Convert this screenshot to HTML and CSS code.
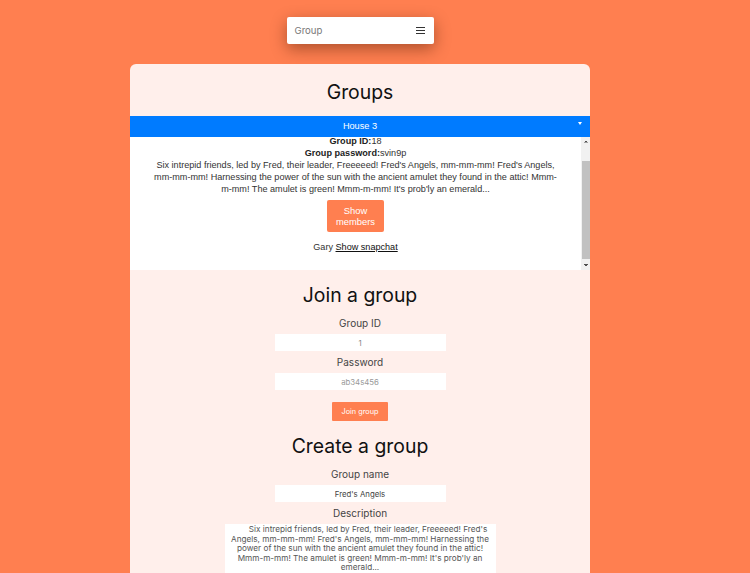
FILE: index.html
```html
<!DOCTYPE html>
<html lang="en">
<head>
<meta charset="utf-8">
<title>Groups</title>
<link rel="stylesheet" href="styles.css">
</head>
<body>
<div class="page">
  <nav class="topnav">
    <span class="topnav-title">Group</span>
    <span class="burger"><i></i><i></i><i></i></span>
  </nav>

  <main class="card">
    <h2 class="heading">Groups</h2>

    <div class="dropdown">House 3</div>
    <div class="panel">
      <div class="panel-scroll" id="panel">
        <div class="panel-inner">
          <div class="line"><b>Group ID:</b>18</div>
          <div class="line"><b>Group password:</b>svin9p</div>
          <p class="desc">Six intrepid friends, led by Fred, their leader, Freeeeed! Fred's Angels, mm-mm-mm! Fred's Angels, mm-mm-mm! Harnessing the power of the sun with the ancient amulet they found in the attic! Mmm-m-mm! The amulet is green! Mmm-m-mm! It's prob'ly an emerald...</p>
          <button class="btn-members">Show<br>members</button>
          <div class="member">Gary <a class="snap">Show snapchat</a></div>
        </div>
      </div>
      <div class="scrollbar" aria-hidden="true">
        <span class="sb-btn sb-up"></span>
        <span class="sb-thumb"></span>
        <span class="sb-btn sb-down"></span>
      </div>
    </div>

    <section class="form">
      <h2 class="heading">Join a group</h2>
      <label class="label">Group ID</label>
      <input class="field field-light" type="text" value="1">
      <label class="label">Password</label>
      <input class="field" type="text" placeholder="ab34s456">
      <button class="btn-join">Join group</button>
    </section>

    <section class="form">
      <h2 class="heading">Create a group</h2>
      <label class="label">Group name</label>
      <input class="field" type="text" value="Fred's Angels">
      <label class="label">Description</label>
      <textarea class="area">       Six intrepid friends, led by Fred, their leader, Freeeeed! Fred's Angels, mm-mm-mm! Fred's Angels, mm-mm-mm! Harnessing the power of the sun with the ancient amulet they found in the attic! Mmm-m-mm! The amulet is green! Mmm-m-mm! It's prob'ly an emerald...</textarea>
    </section>
  </main>
</div>
<script src="script.js"></script>
</body>
</html>
```

FILE: styles.css
```css
* { box-sizing: border-box; }

body {
  margin: 0;
  background: #ff7f50;
  font-family: "Inter", "Liberation Sans", sans-serif;
}

.page {
  width: 720px;
  padding-top: 17px;
}

.topnav {
  width: 147px;
  height: 27px;
  margin: 0 auto;
  display: flex;
  align-items: center;
  justify-content: space-between;
  padding: 0 8px 0 8px;
  background: #fff;
  border-radius: 2px;
  box-shadow: 0 5px 16px rgba(70, 25, 0, 0.45);
}

.topnav-title {
  font-size: 9.6px;
  color: #777;
}

.burger {
  display: flex;
  flex-direction: column;
  gap: 1.5px;
  margin-right: 1px;
}

.burger i {
  display: block;
  width: 9px;
  height: 1.6px;
  background: #333;
}

.card {
  width: 460px;
  margin: 20px auto 0;
  background: #ffefeb;
  border-radius: 6px;
  padding-bottom: 60px;
  overflow: hidden;
}

.heading {
  margin: 0;
  font-weight: 400;
  font-size: 19.4px;
  line-height: 26px;
  color: #111;
  text-align: center;
}

.card > .heading {
  padding: 15px 0 11px;
}

.dropdown {
  position: relative;
  height: 21px;
  line-height: 21px;
  background: #007bff;
  color: #fff;
  text-align: center;
  font-family: "Liberation Sans", Arial, sans-serif;
  font-size: 9.2px;
}

.dropdown::after {
  content: "";
  position: absolute;
  right: 8px;
  top: 6px;
  border-left: 2.5px solid transparent;
  border-right: 2.5px solid transparent;
  border-top: 3px solid #fff;
}

.panel {
  display: flex;
  height: 133px;
  background: #fff;
}

.panel-scroll {
  flex: 1;
  overflow: hidden;
  font-family: "Liberation Sans", Arial, sans-serif;
  font-size: 9.1px;
  line-height: 12px;
  color: #333;
}

.scrollbar {
  width: 9px;
  display: flex;
  flex-direction: column;
  background: #f1f1f1;
}

.sb-btn {
  display: block;
  height: 9px;
  background-repeat: no-repeat;
  background-position: center;
  background-size: 4px 2.5px;
}

.sb-up {
  background-image: conic-gradient(from 140deg at 50% 0, #505050 80deg, transparent 0);
}

.sb-down {
  margin-top: auto;
  background-image: conic-gradient(from -40deg at 50% 100%, #505050 80deg, transparent 0);
}

.sb-thumb {
  display: block;
  height: 98px;
  margin: 15px 0 0 1px;
  background: #c1c1c1;
}

.panel-inner {
  padding: 23px 22px 31px;
  display: flex;
  flex-direction: column;
  align-items: center;
  text-align: center;
}

.line b {
  font-weight: 700;
  color: #222;
}

.desc {
  margin: 0;
}

.btn-members {
  margin-top: 5px;
  width: 57px;
  height: 32px;
  padding: 0;
  border: none;
  border-radius: 2px;
  background: #ff7f50;
  color: #fff;
  font-family: "Liberation Sans", Arial, sans-serif;
  font-size: 9.4px;
  line-height: 11.5px;
}

.member {
  margin-top: 9px;
}

.snap {
  color: #111;
  text-decoration: underline;
}

.form {
  display: flex;
  flex-direction: column;
  align-items: center;
}

.form .heading {
  margin-top: 12px;
}

.label {
  margin-top: 8.5px;
  margin-bottom: 4.5px;
  font-size: 10px;
  line-height: 13px;
  color: #444;
}

.field + .label {
  margin-top: 4.5px;
}

.field {
  width: 171px;
  height: 17px;
  border: none;
  outline: none;
  padding: 0;
  background: #fff;
  text-align: center;
  font-family: "Inter", "Liberation Sans", sans-serif;
  font-size: 7.8px;
  color: #444;
}

.field-light {
  color: #888;
}

.field::placeholder {
  color: #999;
}

.btn-join {
  margin-top: 12px;
  width: 56px;
  height: 19px;
  padding: 0;
  border: none;
  border-radius: 1px;
  background: #ff7f50;
  color: #fff;
  font-family: "Inter", "Liberation Sans", sans-serif;
  font-size: 7.3px;
}

.area {
  width: 271px;
  height: 70px;
  border: none;
  outline: none;
  resize: none;
  padding: 1px 2px;
  background: #fff;
  text-align: center;
  font-family: "Inter", "Liberation Sans", sans-serif;
  font-size: 8.2px;
  line-height: 9.6px;
  color: #555;
  overflow: hidden;
}
```

FILE: script.js
```js
document.getElementById('panel').scrollTop = 25;
```
